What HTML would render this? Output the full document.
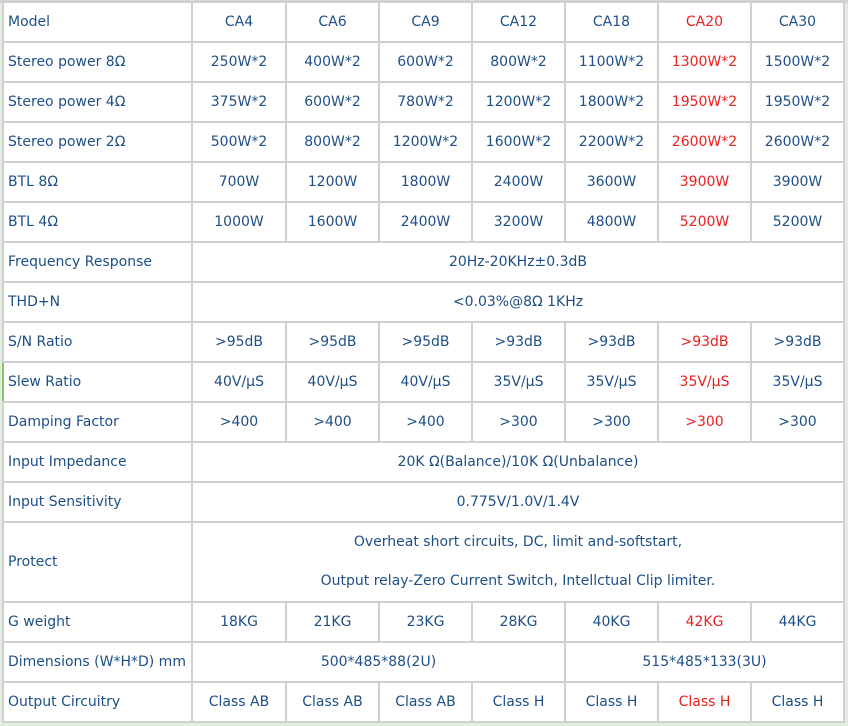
<!DOCTYPE html>
<html><head><meta charset="utf-8"><style>
html,body{margin:0;padding:0;background:#dfeedd;width:848px;height:726px;overflow:hidden}
.top{position:absolute;left:0;top:0;width:848px;height:3px;background:#d4d4d4}
table{position:absolute;left:2px;top:1px;border-collapse:collapse;table-layout:fixed;background:#fff;
font-family:"DejaVu Sans","Liberation Sans",sans-serif;font-size:14px;color:#1e4f86}
td{border:2px solid #d0d0d0;height:38px;padding:0;text-align:center;white-space:nowrap;overflow:hidden}
td.l{text-align:left;padding-left:4px}
.r{color:#e8201e}
tr.p td{height:76px}
</style></head><body>
<div class="top"></div>
<table>
<colgroup><col style="width:189px"><col style="width:94px"><col style="width:93px"><col style="width:93px"><col style="width:93px"><col style="width:93px"><col style="width:93px"><col style="width:93px"></colgroup>
<tr><td class="l">Model</td><td>CA4</td><td>CA6</td><td>CA9</td><td>CA12</td><td>CA18</td><td class="r">CA20</td><td>CA30</td></tr>
<tr><td class="l">Stereo power 8Ω</td><td>250W*2</td><td>400W*2</td><td>600W*2</td><td>800W*2</td><td>1100W*2</td><td class="r">1300W*2</td><td>1500W*2</td></tr>
<tr><td class="l">Stereo power 4Ω</td><td>375W*2</td><td>600W*2</td><td>780W*2</td><td>1200W*2</td><td>1800W*2</td><td class="r">1950W*2</td><td>1950W*2</td></tr>
<tr><td class="l">Stereo power 2Ω</td><td>500W*2</td><td>800W*2</td><td>1200W*2</td><td>1600W*2</td><td>2200W*2</td><td class="r">2600W*2</td><td>2600W*2</td></tr>
<tr><td class="l">BTL 8Ω</td><td>700W</td><td>1200W</td><td>1800W</td><td>2400W</td><td>3600W</td><td class="r">3900W</td><td>3900W</td></tr>
<tr><td class="l">BTL 4Ω</td><td>1000W</td><td>1600W</td><td>2400W</td><td>3200W</td><td>4800W</td><td class="r">5200W</td><td>5200W</td></tr>
<tr><td class="l">Frequency Response</td><td colspan="7">20Hz-20KHz±0.3dB</td></tr>
<tr><td class="l">THD+N</td><td colspan="7">&lt;0.03%@8Ω 1KHz</td></tr>
<tr><td class="l">S/N Ratio</td><td>&gt;95dB</td><td>&gt;95dB</td><td>&gt;95dB</td><td>&gt;93dB</td><td>&gt;93dB</td><td class="r">&gt;93dB</td><td>&gt;93dB</td></tr>
<tr><td class="l" style="border-left-color:#8cc36a">Slew Ratio</td><td>40V/μS</td><td>40V/μS</td><td>40V/μS</td><td>35V/μS</td><td>35V/μS</td><td class="r">35V/μS</td><td>35V/μS</td></tr>
<tr><td class="l">Damping Factor</td><td>&gt;400</td><td>&gt;400</td><td>&gt;400</td><td>&gt;300</td><td>&gt;300</td><td class="r">&gt;300</td><td>&gt;300</td></tr>
<tr><td class="l">Input Impedance</td><td colspan="7">20K Ω(Balance)/10K Ω(Unbalance)</td></tr>
<tr><td class="l">Input Sensitivity</td><td colspan="7">0.775V/1.0V/1.4V</td></tr>
<tr class="p"><td class="l">Protect</td><td colspan="7" style="line-height:39px">Overheat short circuits, DC, limit and-softstart,<br>Output relay-Zero Current Switch, Intellctual Clip limiter.</td></tr>
<tr><td class="l">G weight</td><td>18KG</td><td>21KG</td><td>23KG</td><td>28KG</td><td>40KG</td><td class="r">42KG</td><td>44KG</td></tr>
<tr><td class="l">Dimensions (W*H*D) mm</td><td colspan="4">500*485*88(2U)</td><td colspan="3">515*485*133(3U)</td></tr>
<tr><td class="l">Output Circuitry</td><td>Class AB</td><td>Class AB</td><td>Class AB</td><td>Class H</td><td>Class H</td><td class="r">Class H</td><td>Class H</td></tr>
</table>
</body></html>
